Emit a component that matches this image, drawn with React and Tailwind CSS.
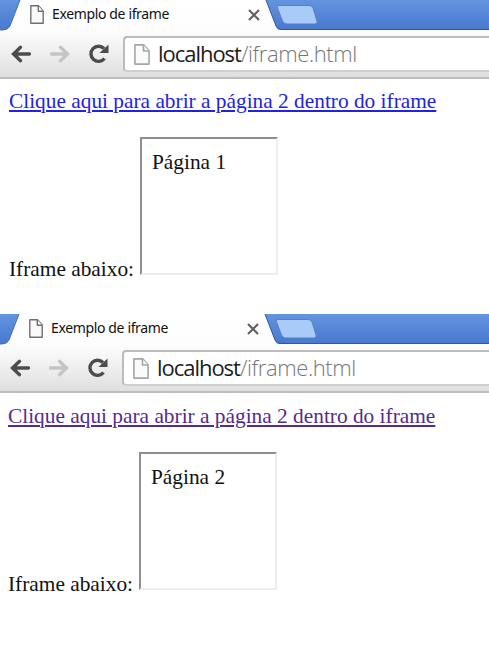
function PageIcon({ className, stroke }) {
  return (
    <svg className={className} viewBox="0 0 14 18" preserveAspectRatio="none" fill="#fafafa" stroke={stroke} strokeWidth="1.4" strokeLinejoin="round">
      <path d="M.8.8H8.5L13.2 5.8V17.2H.8Z" />
      <path d="M8.3.8V6H13.2" />
    </svg>
  );
}

function Arrow({ className }) {
  return (
    <svg className={className} viewBox="0 0 20 17" fill="none" stroke="currentColor" strokeWidth="3.3" strokeLinecap="round">
      <path d="M9.500 1.800 2.500 8.500 9.500 15.200M3 8.500H18.500" />
    </svg>
  );
}

function TabStrip() {
  return (
    <div className="flex h-[31px] shrink-0 bg-linear-to-b from-[#6394df] to-[#4877cd]">
      <svg className="h-[31px] w-[22px] shrink-0" viewBox="0 0 22 31">
        <path d="M20 0 10 26Q8 30 3 30H0V31H22V0Z" fill="#fefefe" />
        <path d="M20 0 10 26Q8 30 3 30H0" fill="none" stroke="#4470b8" strokeWidth="1" />
      </svg>
      <div className="flex w-[243px] shrink-0 items-start bg-linear-to-b from-white to-[#fdfdfd] pl-[8px]">
        <PageIcon className="mt-[5px] h-[19px] w-[14px] shrink-0" stroke="#707070" />
        <span className="mt-[4px] ml-[8px] h-5 w-[196px] font-['Noto_Sans',sans-serif] text-[14px] leading-5 tracking-[-0.36px] whitespace-nowrap text-[#111]">Exemplo de iframe</span>
        <svg className="mt-[9px] h-[12px] w-[12px] shrink-0" viewBox="0 0 12 12" stroke="#626262" strokeWidth="2.2">
          <path d="M1 1 11 11M11 1 1 11" />
        </svg>
      </div>
      <svg className="h-[31px] w-[56px] shrink-0" viewBox="0 0 56 31">
        <path d="M0 0H1L11 26Q12.500 30 16 30H56V31H0Z" fill="#fdfdfd" />
        <path d="M1 0 11 26Q12.500 29.500 16 29.500H56" fill="none" stroke="#2c58a5" strokeWidth="1" />
        <path d="M14 5.500H44Q47 5.500 48 8L52 21Q53 24 50 24H22Q18.500 24 17.500 21L12.500 8Q11.500 5.500 14 5.500Z" fill="#a9cbf8" stroke="#5580c8" strokeWidth="1" />
      </svg>
      <div className="flex-1 border-b border-[#fdfdfd]">
        <div className="h-[30px] border-b border-[#2c58a5]" />
      </div>
    </div>
  );
}

function Toolbar() {
  return (
    <div className="flex h-[48px] shrink-0 items-start border-b-2 border-[#bdbdbd] bg-linear-to-b from-[#fdfdfd] to-[#dfdfdf] pl-[11px]">
      <Arrow className="mt-[14px] h-[18px] w-[20px] shrink-0 text-[#4c4c4c]" />
      <Arrow className="mt-[14px] ml-[19px] h-[18px] w-[20px] shrink-0 rotate-180 text-[#c4c4c4]" />
      <svg className="mt-[12px] ml-[18px] h-[21px] w-[21px] shrink-0" viewBox="0 0 21 21">
        <path d="M16.500 15.500A7.600 7.600 0 1 1 16 5.500" fill="none" stroke="#4c4c4c" strokeWidth="3.4" />
        <path d="M20.500 1.500V10H11.500Z" fill="#4c4c4c" />
      </svg>
      <div className="mt-[5px] ml-[14px] flex h-[36px] flex-1 items-start rounded-l-[4px] border-2 border-r-0 border-[#bcbcbc] border-b-[#cfcfcf] bg-white pl-[9px]">
        <PageIcon className="mt-[6px] h-[21px] w-[16px] shrink-0" stroke="#a5a5a5" />
        <span className="ml-[8px] h-8 font-['Open_Sans',sans-serif] text-[22px] leading-[31px] font-light tracking-[-0.4px] whitespace-nowrap text-[#777]">
          <span className="font-normal tracking-[-1.03px] text-[#1c1c1c]">localhost</span>/iframe.html
        </span>
      </div>
    </div>
  );
}

function BrowserWindow({ page, linkClass, shift, pageGap }) {
  return (
    <section className="h-[314px] overflow-hidden last:h-[339px]">
      <div className={`flex flex-col ${shift}`}>
        <TabStrip />
        <Toolbar />
        <main className={`pl-[9px] font-['Liberation_Serif',serif] text-[21.350px] leading-6 text-[#111] ${pageGap}`}>
          <a className={`block w-max whitespace-nowrap underline decoration-2 underline-offset-2 ${linkClass}`}>Clique aqui para abrir a página 2 dentro do iframe</a>
          <div className="mt-[24px] flex items-end">
            <span className="-mb-[6px] w-[131px] whitespace-nowrap">Iframe abaixo:</span>
            <div className="h-[138px] w-[138px] border-2 border-t-[#8e8e8e] border-r-[#ededed] border-b-[#ededed] border-l-[#8e8e8e] pt-[11px] pl-[10px]">Página {page}</div>
          </div>
        </main>
      </div>
    </section>
  );
}

export default function App() {
  return (
    <div className="h-[653px] w-[489px] overflow-hidden bg-white">
      <BrowserWindow page={1} linkClass="text-[#2222e6]" shift="ml-0" pageGap="pt-[10px]" />
      <BrowserWindow page={2} linkClass="text-[#542b8e]" shift="-ml-px" pageGap="pt-[11px]" />
    </div>
  );
}
